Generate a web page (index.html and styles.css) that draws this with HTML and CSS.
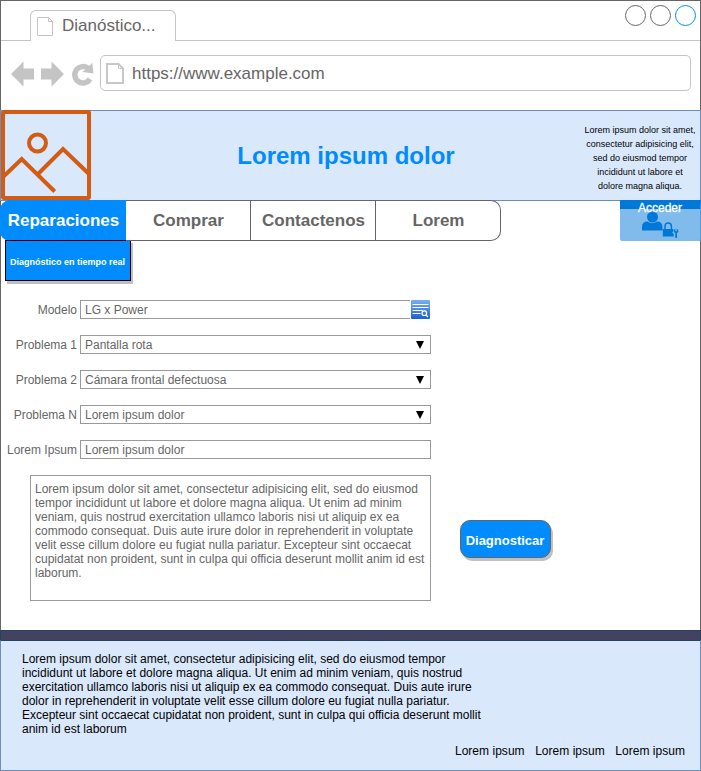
FILE: index.html
```html
<!DOCTYPE html>
<html lang="es">
<head>
<meta charset="utf-8">
<title>Dianóstico</title>
<link rel="stylesheet" href="styles.css">
</head>
<body>
<div class="browser">
  <div class="tabstrip">
    <div class="tab">
      <svg class="tab-page" width="16" height="19" viewBox="0 0 16 19" fill="none" stroke="#c4c4c4"><path d="M.5.5h11l4 4v14H.5zM11.500.5v4h4"/></svg>
      <span>Dianóstico...</span>
    </div>
    <div class="window-buttons"><i></i><i></i><i class="active"></i></div>
  </div>
  <div class="toolbar">
    <svg class="nav-icons" width="84" height="26" viewBox="0 0 84 26" fill="#c4c4c4">
      <path d="M0 13 12.500.5V7.500H23V18.500H12.500V25.500zM53 13 40.500.5V7.500H30V18.500H40.500V25.500z"/>
      <path d="M77.500 7.700A8.200 8.200 0 1 0 79 18" fill="none" stroke="#c4c4c4" stroke-width="5.400"/>
      <path d="M81.300 2 82.500 12.400 71.500 11z"/>
    </svg>
    <div class="address">
      <svg width="18" height="21" viewBox="0 0 18 21" fill="none" stroke="#c8c8c8"><path d="M1 1h11.500L17 5.500V20H1z" stroke-width="2"/><path d="M12.500 1v4.500H17"/></svg>
      <span>https://www.example.com</span>
    </div>
  </div>

  <header class="banner">
    <svg class="logo" width="90" height="90" viewBox="0 0 90 90" fill="none" stroke="#d25c14" stroke-width="4">
      <rect x="2" y="2" width="86" height="86" rx="1"/>
      <circle cx="36.500" cy="33" r="8.500"/>
      <path d="M2 67 20.700 49 53.700 81.500M36 65 62 39 88 64"/>
    </svg>
    <h1>Lorem ipsum dolor</h1>
    <p>Lorem ipsum dolor sit amet,<br>consectetur adipisicing elit,<br>sed do eiusmod tempor<br>incididunt ut labore et<br>dolore magna aliqua.</p>
  </header>

  <div class="menu-row">
    <nav class="menu">
      <a class="current">Reparaciones<span class="submenu">Diagnóstico en tiempo real</span></a>
      <a>Comprar</a>
      <a>Contactenos</a>
      <a>Lorem</a>
    </nav>
    <a class="login">
      <span>Acceder</span>
      <svg width="37" height="28" viewBox="0 0 37 28" fill="#0078d7">
        <circle cx="10.500" cy="6" r="5.500"/>
        <path d="M0 19.500v-3.500q0-5.500 5.500-5.500 5 3.500 9.500 0 5.500 0 5.500 5.500v3.500z"/>
        <path d="M23 19v-3.700a3.200 3.200 0 0 1 6.400 0v3.700" fill="none" stroke="#0078d7" stroke-width="1.500"/>
        <path d="M20.800 18h10.500v2.500l-1 .8 1.500 2v2.200h-11z"/>
        <path d="M32.300 18.600l1.100-.8v2.400h1.400v-2.400a2.300 2.300 0 0 1 .2 4.300V27h-1.700v-4.900a2.300 2.300 0 0 1-1-3.500z"/>
      </svg>
    </a>
  </div>

  <main class="content">
    <div class="form">
      <div class="row"><label>Modelo</label><div class="field lookup">LG x Power</div>
        <svg class="lookup-icon" width="19" height="19" viewBox="0 0 19 19">
          <defs><linearGradient id="g" x2="0" y2="1"><stop stop-color="#78aef5"/><stop offset="1" stop-color="#1b62cf"/></linearGradient></defs>
          <rect width="19" height="19" rx="1" fill="url(#g)"/>
          <path d="M1.500 4.500h16M1.500 7.500h16M1.500 10.500h10M1.500 13.500h8" stroke="#fff"/>
          <circle cx="13.300" cy="13.200" r="2.300" fill="none" stroke="#fff" stroke-width="1.200"/><path d="m15 15 2 2" stroke="#fff" stroke-width="1.300"/>
        </svg>
      </div>
      <div class="row"><label>Problema 1</label><div class="field select">Pantalla rota</div></div>
      <div class="row"><label>Problema 2</label><div class="field select">Cámara frontal defectuosa</div></div>
      <div class="row"><label>Problema N</label><div class="field select">Lorem ipsum dolor</div></div>
      <div class="row"><label>Lorem Ipsum</label><div class="field">Lorem ipsum dolor</div></div>
      <div class="notes">Lorem ipsum dolor sit amet, consectetur adipisicing elit, sed do eiusmod<br>tempor incididunt ut labore et dolore magna aliqua. Ut enim ad minim<br>veniam, quis nostrud exercitation ullamco laboris nisi ut aliquip ex ea<br>commodo consequat. Duis aute irure dolor in reprehenderit in voluptate<br>velit esse cillum dolore eu fugiat nulla pariatur. Excepteur sint occaecat<br>cupidatat non proident, sunt in culpa qui officia deserunt mollit anim id est<br>laborum.</div>
    </div>
    <button class="diagnose">Diagnosticar</button>
  </main>

  <div class="divider"></div>
  <footer class="footer">
    <p>Lorem ipsum dolor sit amet, consectetur adipisicing elit, sed do eiusmod tempor<br>incididunt ut labore et dolore magna aliqua. Ut enim ad minim veniam, quis nostrud<br>exercitation ullamco laboris nisi ut aliquip ex ea commodo consequat. Duis aute irure<br>dolor in reprehenderit in voluptate velit esse cillum dolore eu fugiat nulla pariatur.<br>Excepteur sint occaecat cupidatat non proident, sunt in culpa qui officia deserunt mollit<br>anim id est laborum</p>
    <div class="links"><a>Lorem ipsum</a><a>Lorem ipsum</a><a>Lorem ipsum</a></div>
  </footer>
</div>
</body>
</html>
```
FILE: styles.css
```css
* { box-sizing: border-box; }
body { margin: 0; background: #fff; font: 12px/14px "Liberation Sans", Arial, sans-serif; color: #666; white-space: nowrap; }
.browser { width: 701px; height: 771px; border: 1px solid #666; overflow: visible; }

.tabstrip { display: flex; justify-content: space-between; height: 40px; padding: 4px 4px 0 29px; border-bottom: 1px solid #c4c4c4; }
.tab { display: flex; width: 146px; height: 31px; margin-top: 5px; padding: 6px 0 0 6px; border: 1px solid #c4c4c4; border-bottom: 0; border-radius: 6px 6px 0 0; background: #fff; font-size: 17px; line-height: 18px; }
.tab span { margin-left: 9px; }
.window-buttons { display: flex; gap: 4px; }
.window-buttons i { width: 21px; height: 21px; border: 1px solid #666; border-radius: 50%; }
.window-buttons .active { border-color: #008cff; }

.toolbar { display: flex; height: 69px; padding: 14px 9px 0 10px; }
.nav-icons { margin-top: 6px; }
.address { display: flex; width: 591px; height: 36px; margin-left: 5px; padding: 7px 0 0 5px; border: 1px solid #c4c4c4; border-radius: 5px; font-size: 17px; line-height: 21px; }
.address span { margin-left: 8px; }

.banner { display: flex; height: 91px; margin: 0 -1px; border: 1px solid #6c8ebf; background: #dae8fc; }
.logo { flex: none; margin: -1px 0 0 0; }
.banner h1 { width: 510px; margin: 0; font-size: 24px; line-height: 90px; color: #008cff; text-align: center; }
.banner p { width: 120px; margin: 12px 0 0 -21px; font-size: 9px; text-align: center; color: #000; }

.menu-row { display: flex; justify-content: space-between; height: 41px; margin: -1px -1px 0; }
.menu { display: grid; grid-template-columns: 126px 125px 125px 125px; width: 501px; }
.menu a { position: relative; padding-left: 1px; border: solid #666; border-width: 1px 1px 1px 0; background: #fff; font-weight: bold; font-size: 17px; line-height: 39px; text-align: center; }
.menu a:last-child { border-radius: 0 10px 10px 0; }
.menu .current { padding-left: 2px; border-color: #008cff; border-radius: 10px 0 0 10px; background: #008cff; color: #fff; }
.submenu { position: absolute; left: 5px; top: 39px; width: 126px; height: 41px; padding-right: 1px; border: 1px solid #000; background: #008cff; box-shadow: 2px 3px #c0c0c0; font-size: 9px; line-height: 42px; }
.login { display: flex; flex-direction: column; align-items: center; width: 81px; height: 41px; border-top: 9px solid #0078d7; border-right: 1px solid #4c9bdc; border-radius: 0 0 2px 2px; background: #80bbeb; color: #fff; }
.login span { position: relative; margin-top: -8px; line-height: 14px; -webkit-text-stroke: .3px #fff; }
.login svg { margin: -4px 0 0 0; }

.content { display: flex; height: 389px; padding-top: 59px; }
.form { width: 430px; }
.row { display: flex; height: 19px; margin-bottom: 16px; }
.row label { width: 76px; text-align: right; line-height: 20px; margin-right: 3px; }
.field { position: relative; width: 351px; height: 19px; padding-left: 4px; border: 1px solid #999; line-height: 18px; }
.lookup { width: 330px; border-right: 0; }
.lookup-icon { margin-left: 1px; }
.select::after { content: ""; position: absolute; right: 6px; top: 5px; border: solid transparent; border-width: 8px 4px 0; border-top-color: #000; }
.notes { width: 401px; height: 126px; margin-left: 29px; padding: 6px 4px; border: 1px solid #999; }
.diagnose { width: 91px; height: 38px; margin: 220px 0 0 29px; padding: 4px 1px 0 0; border: 1px solid #666; border-radius: 10px; background: #008cff; box-shadow: 2px 3px #c0c0c0; color: #fff; font: bold 13px/16px "Liberation Sans", Arial, sans-serif; }

.divider { height: 11px; margin: 0 -1px; border: 1px solid #23445d; background: #444263; }
.footer { height: 131px; margin: -1px -1px 0; padding: 11px 15px 0 21px; border: 1px solid #6c8ebf; border-top: 1px solid #23445d; background: #dae8fc; color: #000; }
.footer p { margin: 0; }
.links { display: flex; justify-content: flex-end; gap: 10.500px; margin-top: 8px; letter-spacing: .03px; }
```
